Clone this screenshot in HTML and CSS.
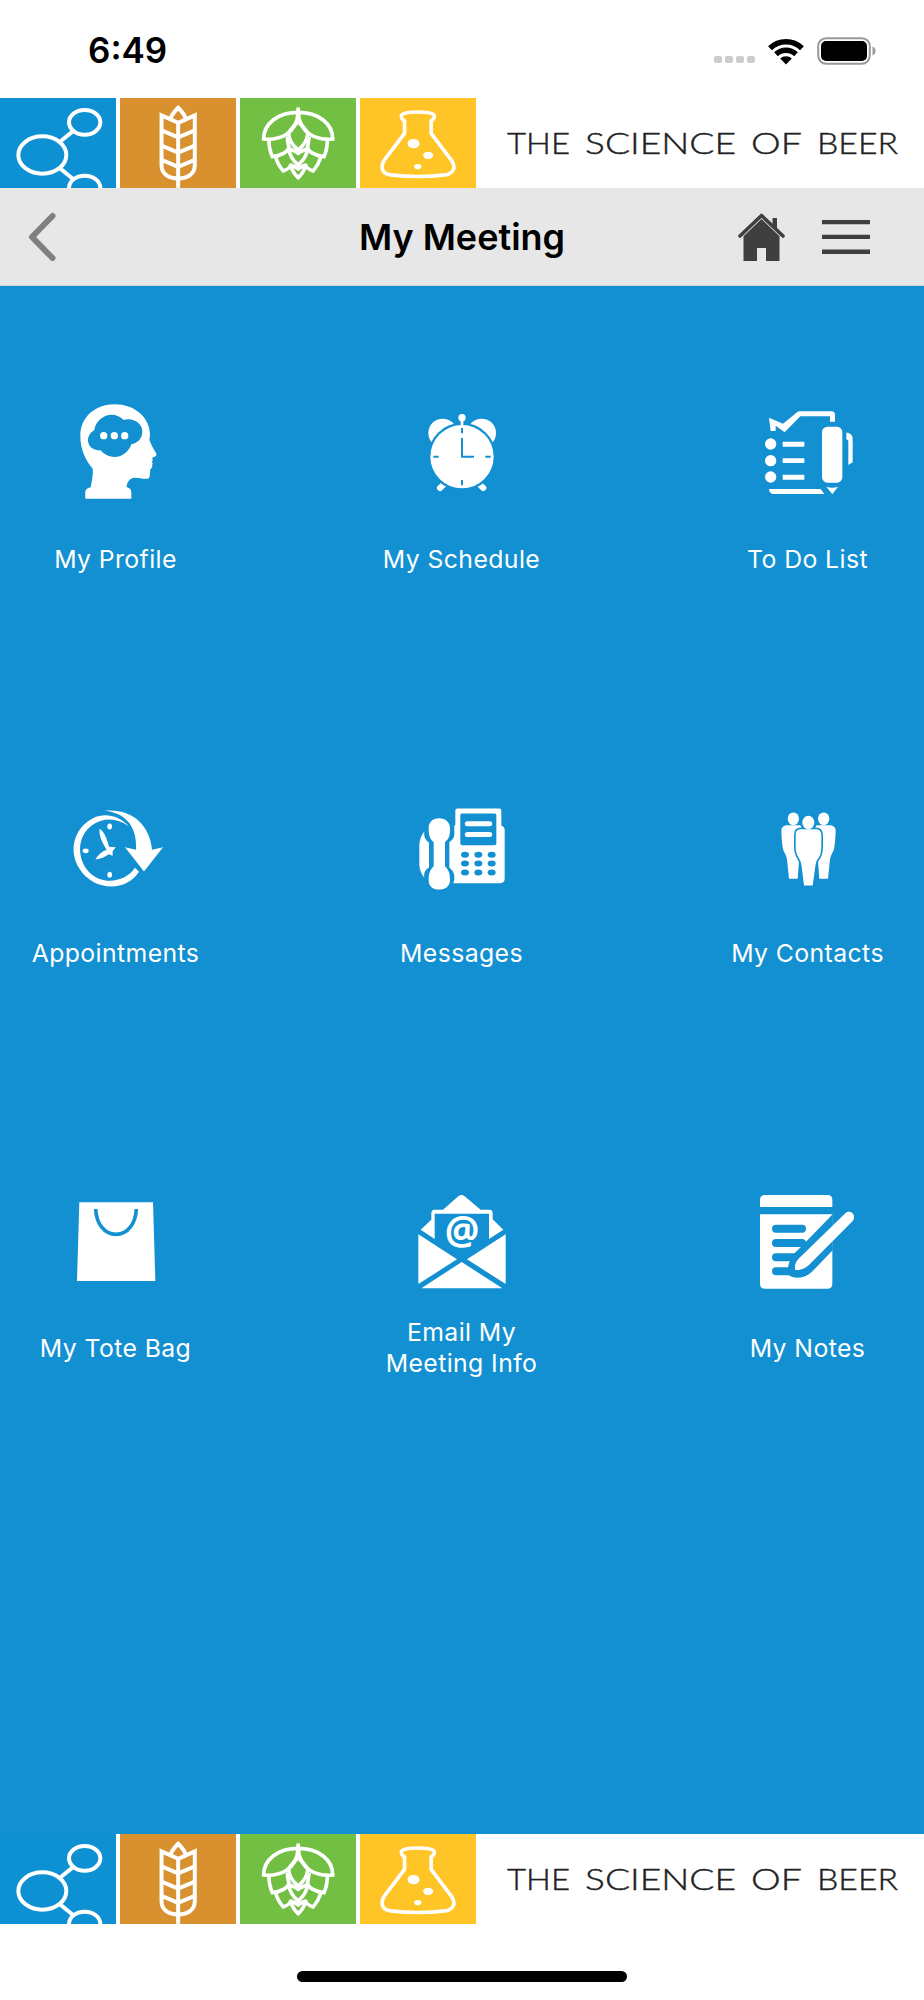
FILE: index.html
```html
<!DOCTYPE html>
<html lang="en">
<head>
    <meta charset="UTF-8">
    <meta name="viewport" content="width=device-width, initial-scale=1.0">
    <title>My Meeting</title>
    <link rel="stylesheet" href="styles.css">
</head>
<body>
    <!-- banner art, shared by header and footer -->
    <svg class="defs" width="0" height="0">
        <symbol id="molecule" viewBox="0 24 348 270">
            <g fill="none" stroke="#fff" stroke-width="12">
                <ellipse cx="127" cy="195" rx="72" ry="56"/>
                <ellipse cx="254" cy="97" rx="47" ry="37"/>
                <ellipse cx="254" cy="294" rx="47" ry="37"/>
                <path d="M179 156l42-34M179 234l40 33"/>
            </g>
        </symbol>
        <symbol id="wheat" viewBox="360 24 349 270">
            <g fill="none" stroke="#fff" stroke-width="12">
                <path d="M535 98v196"/>
                <path d="M535 98l-50-22v150c0 26 22 40 50 40s50-14 50-40V76z"/>
                <path d="M512 86c4-14 14-24 23-33 9 9 19 19 23 33"/>
                <path d="M485 121l50 21 50-21M485 167l50 21 50-21M485 210l50 21 50-21"/>
            </g>
        </symbol>
        <symbol id="hop" viewBox="30 24 349 270">
            <g fill="none" stroke="#fff" stroke-width="11">
                <path d="M205 52v40"/>
                <path d="M205 67c-62 0-104 34-104 80 46 4 100-14 104-80z"/>
                <path d="M205 67c62 0 104 34 104 80-46 4-100-14-104-80z"/>
                <path d="M205 94c-12 14-24 24-29 36 2 22 14 38 29 50 15-12 27-28 29-50-5-12-17-22-29-36z"/>
                <path d="M117 148c0 20 3 36 10 52 20-2 40-8 51-26-4-12-5-24-6-34M293 148c0 20-3 36-10 52-20-2-40-8-51-26 4-12 5-24 6-34"/>
                <path d="M177 176c2 20 12 36 28 49 16-13 26-29 28-49-10 4-20 8-28 14-8-6-18-10-28-14z"/>
                <path d="M137 200c4 16 12 30 23 43 12-4 22-10 27-22M273 200c-4 16-12 30-23 43-12-4-22-10-27-22"/>
                <path d="M183 228c4 14 12 26 22 35 10-9 18-21 22-35-8 0-15 3-22 9-7-6-14-9-22-9z"/>
            </g>
        </symbol>
        <symbol id="flask" viewBox="390 24 349 270">
            <path d="M524 130V92c-10-6-12-12-8-18 12-11 84-11 96 0 4 6 2 12-8 18v38l62 82c16 26 0 40-20 43-52 6-112 6-164 0-20-3-34-17-20-43z" fill="none" stroke="#fff" stroke-width="11" stroke-linejoin="round"/>
            <g fill="#fff">
                <ellipse cx="551" cy="161" rx="18" ry="14"/>
                <ellipse cx="595" cy="196" rx="15" ry="11"/>
                <ellipse cx="564" cy="230" rx="11" ry="8"/>
            </g>
        </symbol>
        <symbol id="slogan" viewBox="0 0 392 40">
            <text y="31" lengthAdjust="spacingAndGlyphs"><tspan x="0" textLength="63" lengthAdjust="spacingAndGlyphs">THE</tspan> <tspan x="78" textLength="151" lengthAdjust="spacingAndGlyphs">SCIENCE</tspan> <tspan x="244" textLength="50" lengthAdjust="spacingAndGlyphs">OF</tspan> <tspan x="310" textLength="81" lengthAdjust="spacingAndGlyphs">BEER</tspan></text>
        </symbol>
    </svg>

    <div class="status-bar">
        <div class="time">6:49</div>
        <div class="status-icons">
            <div class="signal"><i></i><i></i><i></i><i></i></div>
            <svg class="wifi" width="36" height="28" viewBox="0 0 36 28">
                <path d="M2 11.200A23 23 0 0 1 34 11.200M8 17.300A14.500 14.500 0 0 1 28 17.300" fill="none" stroke="#000" stroke-width="5.400"/>
                <path d="M18 27.500l-5.800-5.900a8.400 8.400 0 0 1 11.600 0z"/>
            </svg>
            <svg class="battery" width="60" height="28" viewBox="0 0 60 28">
                <rect x="1.200" y="1.200" width="51.600" height="25.600" rx="8" fill="none" stroke="#999" stroke-width="2"/>
                <rect x="4" y="4" width="46" height="20" rx="5"/>
                <path d="M55.500 9.500c4 1.500 4 7.500 0 9z" fill="#999"/>
            </svg>
        </div>
    </div>

    <div class="banner">
        <div class="tiles">
            <svg class="tile blue"><use href="#molecule"/></svg>
            <svg class="tile orange"><use href="#wheat"/></svg>
            <svg class="tile green"><use href="#hop"/></svg>
            <svg class="tile yellow"><use href="#flask"/></svg>
        </div>
        <svg class="slogan" width="392" height="40"><use href="#slogan"/></svg>
    </div>

    <div class="nav">
        <svg class="back" width="30" height="50" viewBox="0 0 30 50"><path d="M25.500 4L5 25l20.500 21" fill="none" stroke="#808080" stroke-width="6" stroke-linecap="round" stroke-linejoin="round"/></svg>
        <h1>My Meeting</h1>
        <div class="nav-icons">
            <svg width="48" height="48" viewBox="0 0 48 48">
                <path d="M34.500 14V5h4.500v14z"/>
                <path d="M2 23L23.500 2.500 45 23" fill="none" stroke="#3f3f3f" stroke-width="3.600" stroke-linecap="round" stroke-linejoin="round"/>
                <path d="M23.500 5.900L41.500 23.300V48H28V35h-9v13H5.500V23.300z"/>
            </svg>
            <svg width="48" height="36" viewBox="0 0 48 36"><path d="M0 1h48v4.300H0zM0 15.700h48V20H0zM0 30.600h48V35H0z"/></svg>
        </div>
    </div>

    <div class="menu">
        <div class="row">
            <div class="item">
                <svg viewBox="108 6 360 360">
                    <path d="M196 326q-2-26 4-29 4-3 12-5c4-20 8-42 6-56-20-24-37-56-37-98 0-58 46-95 103-95s104 36 106 90c0 12-4 14 1 24 4 12 13 24 18 34 2 5-1 8-11 11l-1 5c2 4 1 6-2 9 4 4 4 6 1 9 2 6 0 9-5 13-2 12 0 20-4 26-8 6-26-1-44-1-14 2-22 12-23 28 14 5 15 10 14 35z"/>
                    <path class="cut" d="M223 120c4-28 28-46 52-46 14 0 26 6 36 16 28-8 56 10 56 34 0 24-16 36-33 39-8 22-26 38-50 38-20 0-34-10-42-20-22 2-38-12-38-30 0-14 8-24 19-31z"/>
                    <circle cx="251" cy="137" r="11"/><circle cx="283" cy="137" r="11"/><circle cx="314" cy="137" r="11"/>
                </svg>
                <div class="label">My Profile</div>
            </div>
            <div class="item">
                <svg viewBox="96 6 360 360">
                    <circle cx="218" cy="129" r="43"/><circle cx="335" cy="129" r="43"/>
                    <path d="M210 294l14-13M340 294l-14-13" stroke="#fff" stroke-width="18" stroke-linecap="round"/>
                    <circle class="cut" cx="276" cy="200" r="102"/>
                    <circle cx="276" cy="200" r="95"/>
                    <circle cx="276" cy="83" r="11"/>
                    <path d="M272 88h8v22h-8z"/>
                    <path d="M276 114v16M276 144v56h36M276 270v16M190 200h16M346 200h16" fill="none" stroke="#1290d1" stroke-width="6"/>
                </svg>
                <div class="label">My Schedule</div>
            </div>
            <div class="item">
                <svg viewBox="114 6 360 360">
                    <path d="M177 83l42 18 43-35q2-2 6-2h96q11 0 11 11v20h-15V79h-89l-47 48-27-20v16h-15z"/>
                    <circle cx="182" cy="162" r="17"/><circle cx="182" cy="212" r="17"/><circle cx="182" cy="261" r="17"/>
                    <path d="M218 155h65v15h-65zM218 205h65v14h-65zM218 254h65v15h-65zM177 297h155l11 15H190q-13-2-13-15z"/>
                    <rect x="336" y="110" width="61" height="168" rx="16"/>
                    <path d="M349 290q17 6 35 0l-17 23zM409 128c12 0 19 7 19 18v71l-13 8v-73l-6-5z"/>
                </svg>
                <div class="label">To Do List</div>
            </div>
        </div>

        <div class="row">
            <div class="item">
                <svg viewBox="108 -10.500 360 360">
                    <path d="M326 107C292 70 240 63 202 94c-44 34-54 93-24 140 40 66 138 74 179 10l-12-12c-34 50-110 52-145 4-32-45-24-103 16-132 34-24 76-22 110 3z"/>
                    <path d="M254 61c76-8 136 38 142 117l33-8-57 73-57-73 33 8c4-64-26-110-94-117z"/>
                    <path d="M239 115c14 10 22 30 28 54l20 1-9 12v14l-12-5c-10 8-24 14-40 16 8-14 20-24 34-29-14-22-24-44-21-63z"/>
                    <ellipse cx="269" cy="108" rx="7" ry="9"/><ellipse cx="269" cy="253" rx="7" ry="9"/><ellipse cx="197" cy="181" rx="9" ry="7"/>
                </svg>
                <div class="label">Appointments</div>
            </div>
            <div class="item">
                <svg viewBox="96 -10.500 360 360">
                    <path d="M262 54h126q6 0 6 6v45q10 4 10 14v145q0 14-14 14H250q4-10 3-22c-1-12-8-18-15-25v-76c12-8 16-16 15-28V104h3V60q0-6 6-6z"/>
                    <path d="M163 123c-2 16 3 24 14 34v74c-12 8-16 16-14 31-9-12-15-26-15-38v-62c0-12 6-28 15-39z"/>
                    <path d="M207 83c20 0 33 12 33 30 0 22-2 30-15 42v72c12 12 15 22 15 42 0 18-14 28-33 28s-31-10-31-28c0-20 3-30 15-42v-72c-12-12-15-20-15-42 0-18 12-30 31-30z"/>
                    <rect class="cut" x="271" y="69" width="108" height="95" rx="5"/>
                    <path d="M292 100h67M292 132h67" stroke="#fff" stroke-width="15" stroke-linecap="round"/>
                    <g class="cut">
                        <ellipse cx="285" cy="193" rx="12" ry="9"/><ellipse cx="325" cy="193" rx="12" ry="9"/><ellipse cx="365" cy="193" rx="12" ry="9"/>
                        <ellipse cx="285" cy="219" rx="12" ry="9"/><ellipse cx="325" cy="219" rx="12" ry="9"/><ellipse cx="365" cy="219" rx="12" ry="9"/>
                        <ellipse cx="285" cy="246" rx="12" ry="9"/><ellipse cx="325" cy="246" rx="12" ry="9"/><ellipse cx="365" cy="246" rx="12" ry="9"/>
                    </g>
                </svg>
                <div class="label">Messages</div>
            </div>
            <div class="item">
                <svg viewBox="114 -10.500 360 360">
                    <ellipse cx="250" cy="85" rx="17" ry="19"/><ellipse cx="341" cy="85" rx="17" ry="19"/>
                    <path d="M228 104h44l4 8v90l-9 10-4 53h-26l-6-58q-2-12-9-24-6-8-8-62 0-14 14-17zM363 104h-44l-4 8v90l9 10 4 53h26l6-58q2-12 9-24 6-8 8-62 0-14-14-17z"/>
                    <circle class="cut" cx="295" cy="96" r="25"/>
                    <path d="M273 116h44q16 0 17 16v36q0 22-8 34-8 8-10 26l-8 57h-26l-7-57q-2-16-9-26-9-14-9-34v-36q0-16 16-16z" stroke="#1290d1" stroke-width="10" paint-order="stroke"/>
                    <ellipse cx="295" cy="96" rx="18" ry="20"/>
                </svg>
                <div class="label">My Contacts</div>
            </div>
        </div>

        <div class="row">
            <div class="item">
                <svg viewBox="108 3 360 360">
                    <path d="M178 67h221l7 236H171z"/>
                    <path d="M227 87c2 44 26 76 61 76s59-32 61-76" fill="none" stroke="#1290d1" stroke-width="11"/>
                </svg>
                <div class="label">My Tote Bag</div>
            </div>
            <div class="item">
                <svg viewBox="0 3 360 360">
                    <path d="M49 163l116 75L49 312zM311 163l-116 75 116 74zM58 325l121-79 122 79zM56 149l32-30V99q0-10 10-10h25l46-40q9-8 19 0l48 40h26q10 0 10 10v19l32 31-43 28V101H98v76z"/>
                    <text class="at" x="180" y="191" textLength="104" lengthAdjust="spacingAndGlyphs">@</text>
                </svg>
                <div class="label">Email My<br>Meeting Info</div>
            </div>
            <div class="item">
                <svg viewBox="144 3 360 360">
                    <path d="M180 81V60q0-15 15-15h187q15 0 15 15v21zM180 103h217v208q0 15-15 15H195q-15 0-15-15z"/>
                    <path d="M228 146h78M228 189h78M228 232h60M228 274h54" stroke="#1290d1" stroke-width="24" stroke-linecap="round"/>
                    <path class="cut" d="M398 103l-102 105c-24 20-36 50-32 75 14 16 48 14 72-8l62-64z"/>
                    <path d="M436 100c16-14 34 6 23 22L332 250c-12 14-30 22-46 20-4-16 4-28 12-36z"/>
                </svg>
                <div class="label">My Notes</div>
            </div>
        </div>
    </div>

    <div class="banner">
        <div class="tiles">
            <svg class="tile blue"><use href="#molecule"/></svg>
            <svg class="tile orange"><use href="#wheat"/></svg>
            <svg class="tile green"><use href="#hop"/></svg>
            <svg class="tile yellow"><use href="#flask"/></svg>
        </div>
        <svg class="slogan" width="392" height="40"><use href="#slogan"/></svg>
    </div>
    <div class="home-indicator"></div>
</body>
</html>
```
FILE: styles.css
```css
:root {
    --blue: #1290d1;
    --dark: #3f3f3f;
}

* {
    box-sizing: border-box;
}

body {
    font-family: Inter, "Liberation Sans", sans-serif;
    background-color: white;
    margin: 0;
    height: 2000px;
    display: flex;
    flex-direction: column;
}

svg {
    display: block;
    flex-shrink: 0;
}

.defs {
    position: absolute;
}

.status-bar {
    height: 98px;
    display: flex;
    justify-content: space-between;
    padding: 0 47px 0 88px;
}

.time {
    font-size: 35px;
    font-weight: 600;
    line-height: 42px;
    padding-top: 29px;
}

.status-icons {
    display: flex;
    padding-top: 37px;
}

.signal {
    display: flex;
    gap: 3px;
    margin-top: 19px;
    margin-right: 13px;
}

.signal i {
    width: 8px;
    height: 7px;
    border-radius: 2px;
    background-color: #ccc;
}

.wifi {
    margin-right: 13px;
}

/* banner */
.banner {
    height: 90px;
    display: flex;
    align-items: center;
    background-color: white;
}

.tiles {
    display: flex;
    gap: 4px;
}

.tile {
    width: 116px;
    height: 90px;
}

.blue {
    background-color: #0d91d2;
}

.orange {
    background-color: #d9902f;
}

.green {
    background-color: #72bf44;
}

.yellow {
    background-color: #ffc425;
}

.slogan {
    margin-left: 31px;
    font-family: Lato, sans-serif;
    font-size: 29px;
    font-weight: 300;
    fill: #222;
    stroke: #222;
    stroke-width: 0.4px;
}

/* title bar */
.nav {
    height: 98px;
    display: grid;
    grid-template-columns: 1fr auto 1fr;
    align-items: center;
    padding: 0 54px 0 27px;
    background-color: #e7e7e7;
    border-bottom: 1px solid #d5d5d5;
}

.nav h1 {
    margin: 0 0 0 27px;
    font-size: 36px;
    font-weight: 600;
}

.nav-icons {
    display: flex;
    justify-content: flex-end;
    align-items: center;
    gap: 36px;
    fill: var(--dark);
}

/* menu grid */
.menu {
    height: 1548px;
    background-color: var(--blue);
}

.row {
    display: flex;
    justify-content: space-between;
    height: 394.5px;
    padding-top: 106px;
    padding-right: 1px;
}

.item {
    width: 231px;
    display: flex;
    flex-direction: column;
    align-items: center;
    gap: 16px;
}

.item svg {
    width: 120px;
    height: 120px;
    fill: white;
}

.item .cut {
    fill: var(--blue);
}

.at {
    font-family: "Open Sans", sans-serif;
    font-size: 116px;
    font-weight: 700;
    text-anchor: middle;
}

.label {
    height: 62px;
    display: flex;
    align-items: center;
    text-align: center;
    color: white;
    font-size: 24.8px;
    line-height: 31px;
    letter-spacing: 0.4px;
}

.home-indicator {
    width: 330px;
    height: 11px;
    margin: 47px auto 0;
    border-radius: 6px;
    background-color: black;
}
```
